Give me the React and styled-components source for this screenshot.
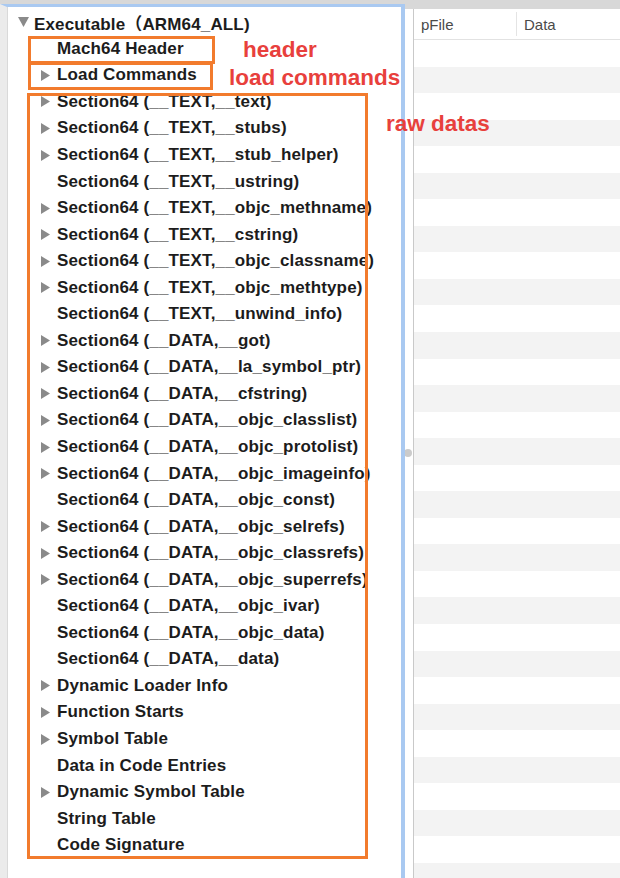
import React from 'react';
import styled, { createGlobalStyle } from 'styled-components';

const ROW_H = 26.55;

const GlobalStyle = createGlobalStyle`
  html, body {
    margin: 0;
    padding: 0;
    background: #d8d8d8;
  }
  #root {
    height: 878px;
  }
`;

const Window = styled.div`
  display: flex;
  height: 878px;
  overflow: hidden;
  background: #d8d8d8;
  font-family: 'Liberation Sans', Arial, sans-serif;
`;

const Outline = styled.div`
  position: relative;
  z-index: 2;
  width: 394px;
  margin-top: 4px;
  padding-top: 2px;
  background: #fff;
  border-left: 7px solid #ebebeb;
  border-top: 3px solid #a9c9f1;
  border-right: 4px solid #a9c9f1;
  box-shadow: inset 1px 0 0 #d9d9d9;
`;

const Row = styled.div`
  display: flex;
  align-items: center;
  height: ${ROW_H}px;
  padding-left: ${(p) => 11 + p.$level * 23}px;
  font-family: 'Liberation Sans', Arial, 'Noto Sans CJK SC', sans-serif;
  font-size: 17px;
  letter-spacing: 0.15px;
  font-weight: 700;
  color: #1c1c1c;
  white-space: nowrap;
`;

const Toggle = styled.span`
  display: flex;
  align-items: center;
  width: 16px;
  flex: none;
  svg {
    display: block;
  }
`;

const Group = styled.div`
  position: relative;
  &::after {
    content: '';
    position: absolute;
    left: ${(p) => p.$left}px;
    top: ${(p) => p.$top}px;
    bottom: ${(p) => p.$bottom}px;
    width: ${(p) => p.$width}px;
    border: 3px solid #f27b2d;
    box-sizing: border-box;
    pointer-events: none;
  }
`;

const Note = styled.span`
  position: absolute;
  left: ${(p) => p.$x}px;
  top: ${(p) => p.$y}px;
  font-size: 22.5px;
  line-height: 22px;
  font-weight: 700;
  color: #e8403c;
  white-space: nowrap;
`;

const Splitter = styled.div`
  position: relative;
  width: 8px;
  margin-top: 9px;
  background: #fff;
  border-right: 1px solid #c9c9c9;
`;

const Knob = styled.span`
  position: absolute;
  left: -1px;
  top: 440px;
  width: 8px;
  height: 8px;
  border-radius: 50%;
  background: #cbcbcb;
`;

const Table = styled.div`
  flex: 1;
  margin-top: 9px;
  background: #fff;
  display: flex;
  flex-direction: column;
`;

const Header = styled.div`
  display: flex;
  align-items: center;
  height: 30px;
  border-bottom: 1px solid #e2e2e2;
  flex: none;
`;

const HeadCell = styled.div`
  width: ${(p) => p.$width}px;
  height: 24px;
  display: flex;
  align-items: center;
  padding-left: 7px;
  box-sizing: border-box;
  font-size: 15px;
  color: #4a4a4a;
  border-right: ${(p) => (p.$divider ? '1px solid #e4e4e4' : 'none')};
  flex: ${(p) => (p.$grow ? 1 : 'none')};
`;

const Stripe = styled.div`
  height: ${ROW_H}px;
  flex: none;
  background: ${(p) => (p.$odd ? '#f3f3f3' : '#fff')};
`;

function Triangle({ open }) {
  return open ? (
    <svg width="11" height="10" viewBox="0 0 11 10">
      <path d="M0 0 H11 L5.5 10 Z" fill="#8a8a8a" />
    </svg>
  ) : (
    <svg width="9" height="11" viewBox="0 0 9 11">
      <path d="M0 0 L9 5.5 L0 11 Z" fill="#8a8a8a" />
    </svg>
  );
}

function TreeRow({ level = 1, expandable, open, children }) {
  return (
    <Row $level={level}>
      <Toggle>{expandable && <Triangle open={open} />}</Toggle>
      {children}
    </Row>
  );
}

const sections = [
  ['__TEXT,__text', true],
  ['__TEXT,__stubs', true],
  ['__TEXT,__stub_helper', true],
  ['__TEXT,__ustring', false],
  ['__TEXT,__objc_methname', true],
  ['__TEXT,__cstring', true],
  ['__TEXT,__objc_classname', true],
  ['__TEXT,__objc_methtype', true],
  ['__TEXT,__unwind_info', false],
  ['__DATA,__got', true],
  ['__DATA,__la_symbol_ptr', true],
  ['__DATA,__cfstring', true],
  ['__DATA,__objc_classlist', true],
  ['__DATA,__objc_protolist', true],
  ['__DATA,__objc_imageinfo', true],
  ['__DATA,__objc_const', false],
  ['__DATA,__objc_selrefs', true],
  ['__DATA,__objc_classrefs', true],
  ['__DATA,__objc_superrefs', true],
  ['__DATA,__objc_ivar', false],
  ['__DATA,__objc_data', false],
  ['__DATA,__data', false],
];

const tail = [
  ['Dynamic Loader Info', true],
  ['Function Starts', true],
  ['Symbol Table', true],
  ['Data in Code Entries', false],
  ['Dynamic Symbol Table', true],
  ['String Table', false],
  ['Code Signature', false],
];

export default function App() {
  return (
    <>
      <GlobalStyle />
      <Window>
        <Outline>
          <TreeRow level={0} expandable open>
            Executable（ARM64_ALL)
          </TreeRow>
          <Group $left={21} $top={0} $bottom={-2} $width={187}>
            <TreeRow>Mach64 Header</TreeRow>
            <Note $x={236} $y={3}>header</Note>
          </Group>
          <Group $left={21} $top={0} $bottom={-1} $width={185}>
            <TreeRow expandable>Load Commands</TreeRow>
            <Note $x={222} $y={5}>load commands</Note>
          </Group>
          <Group $left={20} $top={4} $bottom={0} $width={341}>
            {sections.map(([name, exp]) => (
              <TreeRow key={name} expandable={exp}>
                Section64 ({name})
              </TreeRow>
            ))}
            {tail.map(([name, exp]) => (
              <TreeRow key={name} expandable={exp}>
                {name}
              </TreeRow>
            ))}
            <Note $x={379} $y={24}>raw datas</Note>
          </Group>
        </Outline>
        <Splitter>
          <Knob />
        </Splitter>
        <Table>
          <Header>
            <HeadCell $width={103} $divider>pFile</HeadCell>
            <HeadCell $grow>Data</HeadCell>
          </Header>
          {Array.from({ length: 32 }, (_, i) => (
            <Stripe key={i} $odd={i % 2 === 1} />
          ))}
        </Table>
      </Window>
    </>
  );
}
